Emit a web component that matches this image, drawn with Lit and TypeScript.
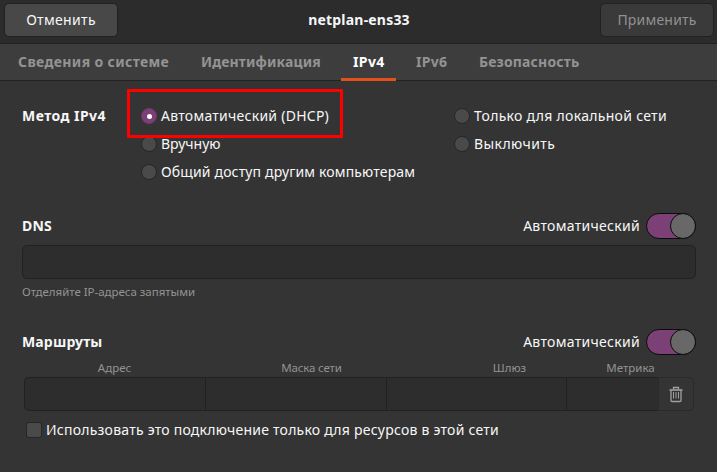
import { LitElement, html, css, svg } from "lit";
import { customElement, property } from "lit/decorators.js";

@customElement("radio-option")
class RadioOption extends LitElement {
  @property({ type: Boolean }) checked = false;
  static styles = css`
    :host { display: flex; align-items: center; height: 28px; white-space: nowrap; }
    .dot { box-sizing: border-box; width: 16px; height: 16px; margin-right: 4px; border-radius: 50%; border: 1px solid #262626; background: #4a4a4a; flex: none; display: flex; align-items: center; justify-content: center; }
    .on { background: #7b4076; border-color: #71396c; }
    .pip { width: 5px; height: 5px; border-radius: 50%; background: #fff; }
  `;
  render() {
    return html`<span class="dot ${this.checked ? "on" : ""}">${this.checked ? html`<i class="pip"></i>` : ""}</span><slot></slot>`;
  }
}

@customElement("toggle-switch")
class ToggleSwitch extends LitElement {
  static styles = css`
    :host { display: flex; justify-content: flex-end; box-sizing: border-box; width: 50px; height: 26px; border: 1px solid #0b0b0b; border-radius: 13px; background: #7b4076; }
    .knob { box-sizing: border-box; width: 26px; height: 26px; margin: -1px; border: 1px solid #0b0b0b; border-radius: 50%; background: #686868; }
  `;
  render() {
    return html`<span class="knob"></span>`;
  }
}

const trash = svg`
  <path d="M4.5 3V1.5H9.5V3" />
  <path class="lid" d="M.5 4H13.5" />
  <path d="M2 4.5V14.5Q2 15.5 3 15.5H11Q12 15.5 12 14.5V4.5" />
  <path class="thin" d="M4.5 6V12.5M7 6V12.5M9.5 6V12.5" />`;

@customElement("app-root")
class AppRoot extends LitElement {
  static styles = css`
    * { box-sizing: border-box; }
    :host { display: block; width: 717px; height: 472px; overflow: hidden; background: #343434; color: #f7f7f7; font: 14px/20px "Noto Sans", sans-serif; white-space: nowrap; }
    .header { display: flex; justify-content: space-between; align-items: flex-start; height: 44px; padding: 3px 3px 0 4px; background: #2c2c2c; border-bottom: 1px solid #212121; }
    .title { font-weight: 700; line-height: 34px; letter-spacing: .2px; }
    .button { width: 114px; height: 34px; border: 1px solid #212121; border-radius: 5px; background: #484848; text-align: center; line-height: 32px; letter-spacing: .33px; }
    .button.off { background: #3a3a3a; color: #919191; letter-spacing: .2px; }
    .tabs { display: flex; height: 37px; padding-left: 6px; background: #3d3d3d; border-bottom: 1px solid #212121; font-weight: 700; color: #939393; }
    .tab { height: 37px; line-height: 36px; padding-left: 12px; }
    .t1 { width: 183px; letter-spacing: .36px; }
    .t2 { width: 152px; letter-spacing: .12px; }
    .t3 { width: 55px; margin-right: 8px; letter-spacing: .4px; }
    .t4 { width: 63px; letter-spacing: .3px; }
    .t5 { letter-spacing: .16px; }
    .active { color: #fff; border-bottom: 3px solid #e2511a; }
    .page { padding: 21px 21px 0 22px; }
    .method { position: relative; display: grid; grid-template-columns: 119px 313px 1fr; grid-auto-rows: 28px; }
    .method .label { letter-spacing: .45px; }
    .label { font-weight: 700; line-height: 28px; letter-spacing: .15px; }
    .c2 { grid-column: 2; } .c3 { grid-column: 3; }
    .r1 { letter-spacing: .26px; }
    .r2 { letter-spacing: .3px; }
    .r4 { letter-spacing: .42px; }
    .r5 { letter-spacing: .15px; }
    .mark { position: absolute; left: 105px; top: -13px; width: 216px; height: 49px; border: 3px solid #f00; border-radius: 1px; }
    .row { display: flex; align-items: center; height: 26px; }
    .row .label { flex: 1; }
    .row toggle-switch { margin-left: 6px; }
    .auto { letter-spacing: .3px; }
    .dns { margin-top: 27px; }
    .entry { height: 34px; margin-top: 6px; border: 1px solid #212121; border-radius: 5px; background: #2d2d2d; }
    .hint { margin-top: 3px; font-size: 11.5px; letter-spacing: -.03px; color: #939393; }
    .routes { margin-top: 27px; }
    .heads { display: grid; grid-template-columns: 181px 181px 180px 92px 36px; height: 20px; padding: 0 2px; margin-top: 3px; font-size: 11.5px; line-height: 20px; color: #939393; }
    .heads span { text-align: center; }
    .heads .mask { padding-left: 32px; letter-spacing: -.15px; }
    .heads .gateway { padding-left: 67px; }
    .heads .metric { padding-left: 37px; }
    .cells { display: grid; grid-template-columns: 181px 181px 180px 92px 36px; height: 34px; margin: -1px 1px 0 2px; }
    .cell { border: 1px solid #212121; border-right: 0; background: #2d2d2d; }
    .cell:first-child { border-radius: 5px 0 0 5px; }
    .delete { display: flex; align-items: center; justify-content: center; border: 1px solid #2a2a2a; border-radius: 0 5px 5px 0; }
    .delete svg { width: 14px; height: 17px; margin-right: 1px; fill: none; stroke: #a0a0a0; stroke-width: 1.3; }
    .delete .lid { stroke-width: 1.6; }
    .delete .thin { stroke-width: 1; }
    .check { display: flex; align-items: center; margin: 9px 0 0 4px; }
    .only { letter-spacing: .235px; }
    .box { width: 16px; height: 16px; margin-right: 4px; border: 1px solid #262626; border-radius: 3px; background: #4a4a4a; }
  `;
  render() {
    return html`
      <div class="header">
        <div class="button">Отменить</div>
        <div class="title">netplan-ens33</div>
        <div class="button off">Применить</div>
      </div>
      <div class="tabs">
        <span class="tab t1">Сведения о системе</span>
        <span class="tab t2">Идентификация</span>
        <span class="tab t3 active">IPv4</span>
        <span class="tab t4">IPv6</span>
        <span class="tab t5">Безопасность</span>
      </div>
      <div class="page">
        <div class="method">
          <span class="label">Метод IPv4</span>
          <radio-option class="c2 r1" checked>Автоматический (DHCP)</radio-option>
          <radio-option class="c3 r2">Только для локальной сети</radio-option>
          <radio-option class="c2 r3">Вручную</radio-option>
          <radio-option class="c3 r4">Выключить</radio-option>
          <radio-option class="c2 r5">Общий доступ другим компьютерам</radio-option>
          <div class="mark"></div>
        </div>
        <div class="row dns"><span class="label">DNS</span><span class="auto">Автоматический</span><toggle-switch></toggle-switch></div>
        <div class="entry"></div>
        <div class="hint">Отделяйте IP-адреса запятыми</div>
        <div class="row routes"><span class="label">Маршруты</span><span class="auto">Автоматический</span><toggle-switch></toggle-switch></div>
        <div class="heads"><span>Адрес</span><span class="mask">Маска сети</span><span class="gateway">Шлюз</span><span class="metric">Метрика</span></div>
        <div class="cells">
          <div class="cell"></div><div class="cell"></div><div class="cell"></div><div class="cell"></div>
          <div class="delete"><svg viewBox="0 0 14 17">${trash}</svg></div>
        </div>
        <div class="check"><span class="box"></span><span class="only">Использовать это подключение только для ресурсов в этой сети</span></div>
      </div>`;
  }
}
